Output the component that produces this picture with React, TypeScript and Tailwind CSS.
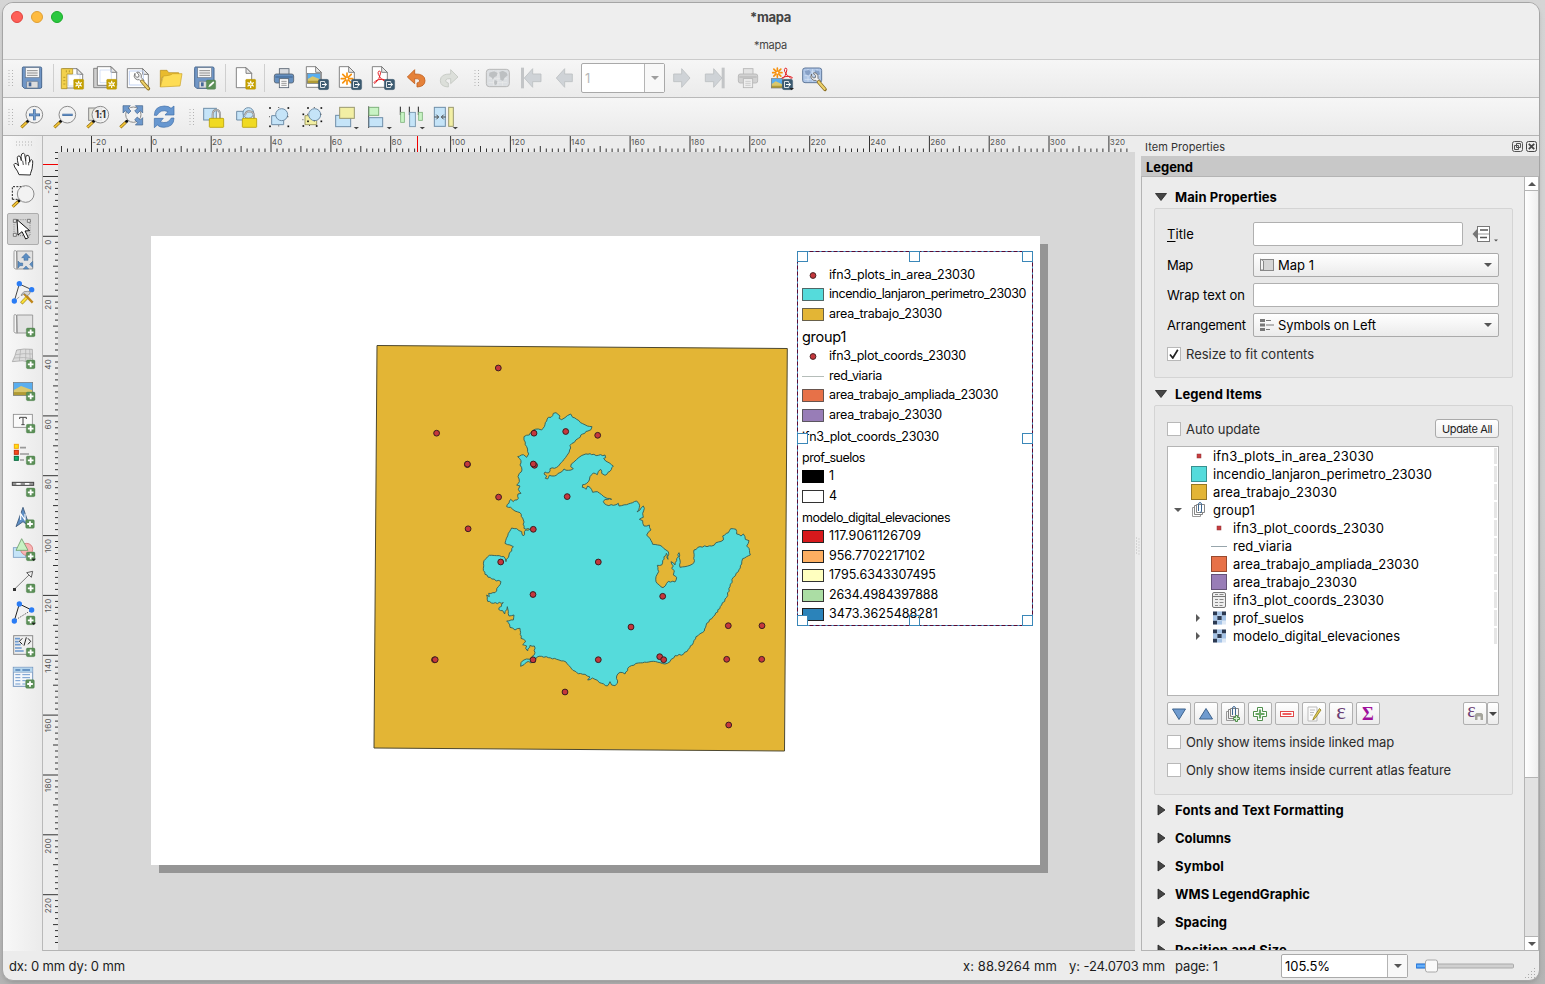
import { useLayoutEffect, useRef, type ReactNode } from "react";

/* ---------- helpers ---------- */

/** Text whose tracking is adjusted so that it spans `w` pixels. */
function Fit({ w, children, className = "" }: { w: number; children: string; className?: string }) {
  const ref = useRef<HTMLSpanElement>(null);
  useLayoutEffect(() => {
    const el = ref.current;
    if (!el) return;
    el.style.letterSpacing = "0px";
    const natural = el.getBoundingClientRect().width;
    el.style.letterSpacing = `${(w - natural) / children.length}px`;
  }, [w, children]);
  return (
    <span ref={ref} className={`inline-block shrink-0 whitespace-pre ${className}`}>
      {children}
    </span>
  );
}

/** 24px icon drawn on a 72-unit grid with its origin at (x, y). */
function I({ x, y, children, className = "" }: { x: number; y: number; children: ReactNode; className?: string }) {
  return (
    <svg className={`h-6 w-6 shrink-0 overflow-visible ${className}`} viewBox={`${x} ${y} 72 72`} fill="none">
      {children}
    </svg>
  );
}

function Sun({ x, y }: { x: number; y: number }) {
  return (
    <g transform={`translate(${x} ${y})`}>
      <rect width="30" height="30" rx="3" fill="#c4a000" stroke="#b39200" />
      <path d="M15 4v22M5.500 9.500l19 11M24.500 9.500l-19 11" stroke="#fff" strokeWidth="3.500" />
      <circle cx="15" cy="15" r="6" fill="#fff" />
      <circle cx="15" cy="15" r="3.500" fill="#e5c93c" />
    </g>
  );
}

function Export({ x, y }: { x: number; y: number }) {
  return (
    <g transform={`translate(${x} ${y})`}>
      <rect width="31" height="31" rx="5" fill="#3b5a70" stroke="#2f4a5e" />
      <path d="M19 10V6.500H6.500v18H19V21" stroke="#fff" strokeWidth="2.500" />
      <path d="M11 15.500h10" stroke="#fff" strokeWidth="3" />
      <path d="M19.500 9.500l7 6-7 6z" fill="#fff" />
    </g>
  );
}

function Plus({ x, y }: { x: number; y: number }) {
  return (
    <g transform={`translate(${x} ${y})`}>
      <rect width="26" height="26" rx="4" fill="#5b8f57" stroke="#447a42" />
      <path d="M13 4.500v17M4.500 13h17" stroke="#fff" strokeWidth="5.500" />
    </g>
  );
}

function Glass({ cx, cy, r = 25 }: { cx: number; cy: number; r?: number }) {
  return (
    <g>
      <path d={`M${cx - 39} ${cy + 38}L${cx - 22} ${cy + 22}`} stroke="#8b6508" strokeWidth="9" />
      <path d={`M${cx - 39} ${cy + 38}L${cx - 23} ${cy + 23}`} stroke="#f3c63a" strokeWidth="5" />
      <circle cx={cx - 20} cy={cy + 20} r="4.500" fill="#111" />
      <circle cx={cx} cy={cy} r={r} fill="#f2f2f2" fillOpacity="0.85" stroke="#8b8b8b" strokeWidth="3" />
    </g>
  );
}

function Floppy() {
  return (
    <g>
      <path d="M69 201h52q4 0 4 4v56q0 4-4 4H73l-6-6v-54q0-4 2-4z" fill="#7096c6" stroke="#49688f" strokeWidth="3" />
      <rect x="76" y="203" width="42" height="30" fill="#f5f5f5" stroke="#68778a" strokeWidth="2" />
      <path d="M81 212h32M81 219h32M81 226h32" stroke="#777" strokeWidth="2.500" />
      <rect x="80" y="244" width="34" height="20" rx="2" fill="#ddd" stroke="#5c6f88" strokeWidth="2" />
      <rect x="86" y="247" width="8" height="12" fill="#456899" />
    </g>
  );
}

function Doc({ x, y, w, h, stroke = "#6d6d6d" }: { x: number; y: number; w: number; h: number; stroke?: string }) {
  return (
    <g stroke={stroke} strokeWidth="2.500" strokeLinejoin="round">
      <path d={`M${x} ${y}h${w - 17}l17 17v${h - 17}h${-w}z`} fill="#fff" />
      <path d={`M${x + w - 17} ${y}v17h17z`} fill="#e8e8e8" />
    </g>
  );
}

function Printer({ x, faded = false }: { x: number; faded?: boolean }) {
  return (
    <g transform={`translate(${x} 0)`} strokeWidth="2.500" stroke={faded ? "#b4b4b4" : "#55616f"}>
      <rect x="15" y="206" width="29" height="20" fill={faded ? "#e3e3e3" : "#d8dbe0"} />
      <rect x="0" y="222" width="58" height="27" rx="6" fill={faded ? "#d2d2d2" : "#6690c0"} />
      <path d="M3 231h52" stroke={faded ? "#bdbdbd" : "#49709f"} strokeWidth="4" />
      <rect x="15" y="236" width="28" height="27" fill={faded ? "#eee" : "#fafafa"} />
      <path d="M21 244h16M21 250h16M21 256h16" stroke={faded ? "#bbb" : "#666"} strokeWidth="2" />
    </g>
  );
}

function Wrench({ x, y }: { x: number; y: number }) {
  return (
    <g transform={`translate(${x} ${y})`}>
      <path d="M3 4q-6 9 1 16 6 5 12 3l8 8 6-6-8-8q2-9-5-15-5-3-9-1l7 8-1 6-6 1-5-6z" fill="#f4f4f4" stroke="#666" strokeWidth="2.500" />
      <path d="M24 28l19 22" stroke="#8a6d20" strokeWidth="11" strokeLinecap="round" />
      <path d="M24 28l18 21" stroke="#ecd06a" strokeWidth="6.500" strokeLinecap="round" />
    </g>
  );
}

function Landscape({ x, y, w, h }: { x: number; y: number; w: number; h: number }) {
  return (
    <g transform={`translate(${x} ${y})`}>
      <rect width={w} height={h} fill="#59aef0" />
      <path d={`M0 ${h * 0.6}L${w * 0.4} ${h * 0.28}L${w} ${h * 0.6}V${h}H0z`} fill="#d9c76c" />
      <path d={`M0 ${h * 0.75}H${w}V${h}H0z`} fill="#b09b35" />
      <rect width={w} height={h} stroke="#777" strokeWidth="2" />
    </g>
  );
}

function Burst({ cx, cy, r = 17 }: { cx: number; cy: number; r?: number }) {
  return (
    <g stroke="#f7920e" strokeWidth="5" strokeLinecap="round">
      <path d={`M${cx} ${cy - r}V${cy + r}M${cx - r} ${cy}H${cx + r}`} />
      <path d={`M${cx - r * 0.75} ${cy - r * 0.75}l${r * 1.5} ${r * 1.5}M${cx + r * 0.75} ${cy - r * 0.75}l${-r * 1.5} ${r * 1.5}`} />
      <circle cx={cx} cy={cy} r="3" fill="#fff" stroke="none" />
    </g>
  );
}

const pdfCurve = (x: number, y: number) =>
  `M${x} ${y}q7-3 5 8-2 15-14 26-5 4-5 0 2-6 14-9 14-3 20 1 5 5-3 3-12-5-18-20-2-6 1-9`;

function Dots({ className }: { className: string }) {
  return (
    <svg className={`shrink-0 ${className}`} viewBox="0 0 6 19" fill="none">
      <path d="M1 1v18M4.500 1v18" stroke="#b3b3b3" strokeWidth="1" strokeDasharray="1 2" />
    </svg>
  );
}

function Tri({ className, d = "M0 0h8L4 4z" }: { className: string; d?: string }) {
  return (
    <svg className={`h-1 w-2 shrink-0 ${className}`} viewBox="0 0 8 4">
      <path d={d} fill="currentColor" />
    </svg>
  );
}

/* ---------- toolbars ---------- */

function LayoutToolbar() {
  return (
    <div className="flex h-[38px] items-center border-t border-[#cbcbcb] bg-gradient-to-b from-[#f6f6f6] to-[#ebebeb] pb-px pl-[5px]">
      <Dots className="mr-[6px] h-[19px] w-[6px]" />
      <I x={60} y={198}><Floppy /></I>
      <span className="mr-[6px] ml-[9px] h-7 w-px shrink-0 bg-[#cfcfcf]" />
      <div className="flex shrink-0 gap-[9px]">
        <I x={180} y={198}>
          <Doc x={188} y={206} w={60} h={58} />
          <path d="M205 224h35v34h-35z" stroke="#c2d3f3" strokeWidth="2" />
          <path d="M184 206h34v16h-17v44h-17z" fill="#f3d14c" stroke="#b2942a" strokeWidth="2.500" />
          <path d="M190 232h6M190 242h6M190 252h6M199 211v6M208 211v6" stroke="#9c7e1c" strokeWidth="2" />
          <Sun x={221} y={238} />
        </I>
        <I x={279} y={198}>
          <path d="M281 205h52v58h-52z" fill="#cfcfcf" stroke="#777" strokeWidth="2.500" />
          <Doc x={292} y={200} w={58} h={56} />
          <path d="M300 210h34v38h-34z" stroke="#c2d3f3" strokeWidth="2" />
          <Sun x={320} y={238} />
        </I>
        <I x={378} y={198}>
          <Doc x={382} y={206} w={63} h={57} />
          <path d="M388 213h42v42h-42z" stroke="#c2d3f3" strokeWidth="3" />
          <Wrench x={402} y={216} />
        </I>
        <I x={477} y={198}>
          <path d="M481 211h20l5 7h30v14h-50l-5 28z" fill="#e9bb2d" stroke="#b38b18" strokeWidth="2" />
          <path d="M490 228q24-2 28-7h28l-6 37-59 3z" fill="#fddc55" stroke="#c9a024" strokeWidth="2" />
        </I>
        <I x={576} y={198}>
          <g transform="translate(517 0)"><Floppy /></g>
          <rect x="619" y="240" width="28" height="28" rx="4" fill="#5b8f57" stroke="#447a42" />
          <path d="M625 262l3-8 12-10 3 4-11 11z" fill="#fff" />
        </I>
      </div>
      <span className="mr-[7px] ml-[9px] h-7 w-px shrink-0 bg-[#cfcfcf]" />
      <I x={699} y={198}>
        <Doc x={709} y={203} w={46} h={60} />
        <Sun x={737} y={238} />
      </I>
      <span className="mr-[7px] ml-[7px] h-7 w-px shrink-0 bg-[#cfcfcf]" />
      <div className="flex shrink-0 gap-[9px]">
        <I x={816} y={198}><Printer x={823} /></I>
        <I x={915} y={198}>
          <Doc x={919} y={200} w={45} h={62} />
          <Landscape x={922} y={220} w={39} h={30} />
          <Export x={955} y={238} />
        </I>
        <I x={1014} y={198}>
          <Doc x={1018} y={200} w={45} h={62} />
          <Burst cx={1041} cy={236} />
          <Export x={1054} y={238} />
        </I>
        <I x={1113} y={198}>
          <Doc x={1117} y={200} w={45} h={62} />
          <path d={pdfCurve(1136, 214)} stroke="#e5252a" strokeWidth="3" />
          <Export x={1153} y={238} />
        </I>
        <I x={12} y={198}>
          <path d="M22 231l22-22v13q31-1 31 20 0 18-24 19v-12q10-2 8-9-3-5-15-4v15z" fill="#e58139" stroke="#c05f1d" strokeWidth="2.500" strokeLinejoin="round" />
        </I>
        <I x={111} y={198}>
          <path d="M174 231l-22-22v13q-31-1-31 20 0 18 24 19v-12q-10-2-8-9 3-5 15-4v15z" fill="#dcdfda" stroke="#c3c7c1" strokeWidth="2.500" strokeLinejoin="round" />
        </I>
      </div>
      <Dots className="mr-[6px] ml-[13px] h-[19px] w-[6px]" />
      <div className="flex shrink-0 gap-[9px]">
        <I x={258} y={198}>
          <rect x="259" y="208" width="69" height="52" rx="9" fill="#dcdfe2" stroke="#b7b7b7" strokeWidth="3" />
          <path d="M266 222h55M266 235h55M266 248h55M280 211v46M294 211v46M308 211v46" stroke="#ececec" strokeWidth="2" />
          <path d="M268 218l14-4 11 5-3 9-7 4-4 7-5-7-7-4zM298 217l10-5 12 6 3 8-9 7-5 10-8-4-1-12zM284 240l8 3-1 9-6 4-3-8z" fill="#bdc0c2" />
        </I>
        <I x={357} y={198}>
          <rect x="363" y="203" width="9" height="62" fill="#c3c5c7" />
          <path d="M373 234l25-28v16h25v23h-25v17z" fill="#cfd3d7" stroke="#bcbfc2" strokeWidth="2.500" />
        </I>
        <I x={456} y={198}>
          <path d="M469 234l25-28v16h23v23h-23v17z" fill="#cfd3d7" stroke="#bcbfc2" strokeWidth="2.500" />
        </I>
      </div>
      <div className="mr-[5px] ml-[5px] flex h-[30px] w-[84px] shrink-0 rounded-[2px] border border-[#a9a9a9] bg-white">
        <div className="flex flex-1 items-center pl-[3px] text-[13px] text-[#b8b8b8]">1</div>
        <div className="flex w-5 items-center justify-center border-l border-[#b5b5b5] bg-[#f8f8f8] text-[#9e9e9e]"><Tri className="" /></div>
      </div>
      <div className="flex shrink-0 gap-[9px]">
        <I x={810} y={198}>
          <path d="M870 234l-25-28v16h-24v23h24v17z" fill="#cfd3d7" stroke="#bcbfc2" strokeWidth="2.500" />
        </I>
        <I x={909} y={198}>
          <rect x="965" y="203" width="9" height="62" fill="#c3c5c7" />
          <path d="M966 234l-25-28v16h-25v23h25v17z" fill="#cfd3d7" stroke="#bcbfc2" strokeWidth="2.500" />
        </I>
        <I x={1008} y={198}><Printer x={1015} faded /></I>
        <I x={1107} y={198}>
          <Burst cx={1132} cy={218} r={14} />
          <path d={pdfCurve(1155, 205)} stroke="#e5252a" strokeWidth="3" />
          <Landscape x={1114} y={236} w={33} h={28} />
          <Export x={1147} y={238} />
          <path d="M1168 264h14l-7 7z" fill="#222" />
        </I>
        <I x={1206} y={198}>
          <rect x="1208" y="204" width="57" height="44" rx="7" fill="#adc5e6" stroke="#61799b" strokeWidth="3" />
          <path d="M1214 216h46M1214 227h46M1214 238h46M1224 207v38M1238 207v38M1251 207v38" stroke="#dbe7f6" strokeWidth="2" />
          <path d="M1214 213l13-3 6 6-8 11-8-5zM1245 211l13 2 2 10-9 5-7-9z" fill="#86a0c6" />
          <Wrench x={1232} y={218} />
        </I>
      </div>
    </div>
  );
}

function Corner({ x, y, w, h }: { x: number; y: number; w: number; h: number }) {
  return (
    <g fill="#111">
      {[0, 0.5, 1].map((a) =>
        [0, 0.5, 1].map((b) =>
          a === 0.5 && b === 0.5 ? null : (
            <rect key={`${a}-${b}`} x={x + a * w - 2.5} y={y + b * h - 2.5} width={a === 0.5 || b === 0.5 ? 2.5 : 5} height={a === 0.5 || b === 0.5 ? 2.5 : 5} />
          ),
        ),
      )}
    </g>
  );
}

function ActionsToolbar() {
  return (
    <div className="flex h-[38px] items-center gap-[9px] border-t border-[#b9b9b9] bg-gradient-to-b from-[#f6f6f6] to-[#ebebeb] pt-px pl-[5px]">
      <Dots className="-mr-[3px] h-[19px] w-[6px]" />
      <I x={60} y={315}>
        <Glass cx={103} cy={344} />
        <path d="M103 328v33M87 344.500h33" stroke="#40699a" strokeWidth="8" />
        <path d="M103 330v29M89 344.500h29" stroke="#6f9bcf" strokeWidth="4" />
      </I>
      <I x={159} y={315}>
        <Glass cx={202} cy={344} />
        <path d="M187 344.500h31" stroke="#40699a" strokeWidth="7" />
        <path d="M189 344.500h27" stroke="#6f9bcf" strokeWidth="3" />
      </I>
      <I x={258} y={315}>
        <rect x="266" y="324" width="38" height="37" fill="#e5e5dc" stroke="#888" strokeWidth="3" />
        <Glass cx={301} cy={344} />
        <text x="301" y="354" textAnchor="middle" fontSize="29" fontWeight="700" fill="#333" fontFamily="Inter" letterSpacing="-1">1:1</text>
      </I>
      <I x={357} y={315}>
        <Glass cx={400} cy={344} r={23} />
        <g fill="#6d98cc" stroke="#3f608a" strokeWidth="2">
          <path d="M369 317h22l-7 7 9 9-8 8-9-9-7 7z" />
          <path d="M428 317v22l-7-7-9 9-8-8 9-9-7-7z" />
          <path d="M428 375h-22l7-7-9-9 8-8 9 9 7-7z" />
        </g>
      </I>
      <I x={456} y={315}>
        <path d="M463 346q0-27 30-28 14 0 20 7l9-7v27h-27l9-10q-22-9-33 11z" fill="#6797d0" stroke="#3e6da7" strokeWidth="2" />
        <path d="M522 354q0 27-30 28-14 0-20-7l-9 8v-28h27l-9 10q22 9 33-11z" fill="#6797d0" stroke="#3e6da7" strokeWidth="2" />
      </I>
      <Dots className="-mr-[3px] ml-[4px] h-[19px] w-[6px]" />
      <I x={603} y={315}>
        <rect x="611" y="325" width="38" height="35" fill="#c5e4f8" stroke="#6f8ea8" strokeWidth="3" />
        <path d="M638 357v-13q0-14 11-14t11 14v13" stroke="#8a8a8a" strokeWidth="6" />
        <path d="M638 357v-13q0-14 11-14t11 14v13" stroke="#ddd" strokeWidth="2" />
        <rect x="628" y="355" width="43" height="27" rx="2" fill="#f0da22" stroke="#b7a008" strokeWidth="2.500" />
      </I>
      <I x={702} y={315}>
        <path d="M710 334h20v26h-20z" fill="#c5e4f8" stroke="#6f8ea8" strokeWidth="3" />
        <circle cx="745" cy="339" r="16" fill="#c5e4f8" stroke="#6f8ea8" strokeWidth="3" />
        <path d="M735 346q2-12 12-12 14 1 15 13v10" stroke="#8a8a8a" strokeWidth="6" />
        <path d="M735 346q2-12 12-12 14 1 15 13v10" stroke="#ddd" strokeWidth="2" />
        <rect x="727" y="355" width="43" height="27" rx="2" fill="#f0da22" stroke="#b7a008" strokeWidth="2.500" />
      </I>
      <I x={801} y={315}>
        <path d="M815 347h36v27h-36z" fill="#c5e4f8" stroke="#6f8ea8" strokeWidth="3" />
        <circle cx="845" cy="344" r="18" fill="#c5e4f8" stroke="#6f8ea8" strokeWidth="3" />
        <Corner x={810} y={324} w={55} h={55} />
      </I>
      <I x={900} y={315}>
        <path d="M915 347h35v27h-35z" fill="#f2efa4" stroke="#8f8c50" strokeWidth="2.500" />
        <Corner x={910} y={343} w={40} h={35} />
        <circle cx="944" cy="344" r="18" fill="#c5e4f8" stroke="#6f8ea8" strokeWidth="3" />
        <Corner x={924} y={324} w={40} h={40} />
      </I>
      <I x={999} y={315}>
        <rect x="1007" y="346" width="45" height="34" fill="#c5e4f8" stroke="#6f8ea8" strokeWidth="3" />
        <rect x="1019" y="322" width="44" height="33" fill="#f2efa4" stroke="#9a9870" strokeWidth="3" />
        <path d="M1061 381h16l-8 7z" fill="#444" />
      </I>
      <I x={1098} y={315}>
        <path d="M1106 319v65" stroke="#444" strokeWidth="3" />
        <rect x="1107" y="322" width="29" height="24" fill="#c8f3c4" stroke="#7fb27c" strokeWidth="3" />
        <rect x="1107" y="353" width="41" height="27" fill="#c5e4f8" stroke="#6f8ea8" strokeWidth="3" />
        <path d="M1160 381h16l-8 7z" fill="#444" />
      </I>
      <I x={-3} y={315}>
        <path d="M1 320v25M28 320v25M55 320v25" stroke="#222" strokeWidth="3" />
        <rect x="2" y="337" width="11" height="30" fill="#c8f3c4" stroke="#7fb27c" strokeWidth="2.500" />
        <rect x="29" y="337" width="17" height="43" fill="#c5e4f8" stroke="#6f8ea8" strokeWidth="2.500" />
        <rect x="56" y="337" width="11" height="24" fill="#c8f3c4" stroke="#7fb27c" strokeWidth="2.500" />
        <path d="M59 381h16l-8 7z" fill="#444" />
      </I>
      <I x={96} y={315}>
        <rect x="103" y="322" width="33" height="57" fill="#c5e4f8" stroke="#6f8ea8" strokeWidth="3" />
        <rect x="146" y="322" width="14" height="57" fill="#f2efa4" stroke="#9a9870" strokeWidth="3" />
        <path d="M103 351h12M109 344l7 7-7 7M137 351h-12M131 344l-7 7 7 7" stroke="#444" strokeWidth="3" />
        <path d="M158 381h16l-8 7z" fill="#444" />
      </I>
    </div>
  );
}

function Scroll({ y }: { y: number }) {
  return (
    <g transform={`translate(0 ${y})`} stroke="#8d8d8d" strokeWidth="2.500">
      <path d="M50 6h48v54H50z" fill="#e2e2e2" />
      <path d="M50 8q-8-8-8 2v46q2 6 10 4z" fill="#f6f6f6" />
      <path d="M50 6v53" />
    </g>
  );
}

function Toolbox() {
  return (
    <div className="flex w-10 shrink-0 flex-col items-center border-r border-[#b9b9b9] bg-gradient-to-r from-[#f8f8f8] to-[#ebebeb] pt-[5px] pl-px">
      <svg className="mb-[7px] ml-[3px] h-[5px] w-[17px] shrink-0" viewBox="0 0 17 5" fill="none">
        <path d="M0 1h17M0 4h17" stroke="#b3b3b3" strokeDasharray="1 2" />
      </svg>
      <div className="flex flex-col items-center gap-2">
        <I x={33} y={69}>
          <path d="M57 134q-3-10-13-23-5-9 1-11 5-1 11 8-5-19-4-26 2-7 8-3 2 4 4 13-2-14 1-20 6-6 9 1l3 19q-1-13 3-16 6-2 8 5l1 16q1-8 5-8 6 1 4 12-1 18-5 25-2 5-2 9z" fill="#fff" stroke="#2c2c2c" strokeWidth="3" strokeLinejoin="round" />
          <path d="M68 92l2 13M77 91l1 13M86 96v10" stroke="#2c2c2c" strokeWidth="2.500" />
        </I>
        <I x={33} y={165}>
          <path d="M37 208v-38h40M37 208h24" stroke="#222" strokeWidth="3" strokeDasharray="6 4" />
          <Glass cx={77} cy={192} />
        </I>
        <div className="-my-1 flex h-8 w-8 items-center justify-center rounded-[2px] border border-[#adadad] bg-[#d5d5d5]">
          <I x={33} y={261}>
            <path d="M42 269h48v48H42z" stroke="#666" strokeWidth="2.500" strokeDasharray="2.500 4" />
            <path d="M40 268h9v9h-9zM82 268h9v9h-9zM40 310h9v9h-9z" stroke="#666" strokeWidth="2.500" fill="#e8e8e8" />
            <path d="M51 269l3 46 12-10 11 22 8-4-10-20 14-1z" fill="#fff" stroke="#111" strokeWidth="3" />
          </I>
        </div>
        <I x={33} y={357}>
          <Scroll y={357} />
          <g fill="#5b8ec4" stroke="#3a6492" strokeWidth="1.500">
            <path d="M78 370l13 13h-7v8H72v-8h-7z" />
            <path d="M54 393l6 6h8v8h-8l-6 7zM98 394l-9 9 9 9zM70 417l8-9 8 9z" />
          </g>
        </I>
        <I x={33} y={453}>
          <path d="M43 513l15-51 37 17" stroke="#222" strokeWidth="2.500" />
          <path d="M43 513l16-13" stroke="#222" strokeWidth="2.500" strokeDasharray="2 3" />
          <g fill="#2a7cf5"><circle cx="58" cy="461" r="8" /><circle cx="95" cy="479" r="8" /><circle cx="43" cy="513" r="8" /></g>
          <path d="M64 520l20-21" stroke="#9b7b12" strokeWidth="10" /><path d="M65 519l18-19" stroke="#f8df3a" strokeWidth="7" />
          <path d="M72 491l26 27" stroke="#bf861a" strokeWidth="7" />
          <path d="M63 495q7-14 20-11l8 1-3 8-7 4-6-6q-7-1-10 7z" fill="#d5d5d5" stroke="#777" strokeWidth="2" />
        </I>
        <I x={33} y={549}><Scroll y={549} /><Plus x={79} y={594} /></I>
        <I x={33} y={645}>
          <path d="M50 660q21-5 47-2l1 40q-32-10-61-3 9-17 13-35z" fill="#dcdcdc" stroke="#999" strokeWidth="2" />
          <path d="M47 674q25-5 51-2M42 684q30-4 56 2M62 659l-4 34M77 657v38M89 657l2 38" stroke="#adadad" strokeWidth="2" />
          <Plus x={79} y={690} />
        </I>
        <I x={33} y={741}><Landscape x={40} y={757} w={58} h={39} /><Plus x={79} y={786} /></I>
        <I x={33} y={27}>
          <rect x="40" y="43" width="57" height="39" fill="#fafafa" stroke="#8a8a8a" strokeWidth="2.500" />
          <path d="M59 57v-5h20v5M69 53v21M64 74h10" stroke="#444" strokeWidth="3" />
          <Plus x={79} y={73} />
        </I>
        <I x={33} y={123}>
          <g strokeWidth="3">
            <rect x="43" y="133" width="12" height="12" fill="#fce114" stroke="#f5a50b" />
            <rect x="43" y="151" width="12" height="12" fill="#fb4a1f" stroke="#bd2f0c" />
            <rect x="43" y="169" width="12" height="12" fill="#10b36c" stroke="#0b6a3f" />
          </g>
          <path d="M60 143h18M60 162h27M60 180h12" stroke="#999" strokeWidth="5" />
          <Plus x={79} y={168} />
        </I>
        <I x={33} y={219}>
          <rect x="37" y="247" width="64" height="9" fill="#999" stroke="#444" strokeWidth="3" />
          <path d="M49 251.500h13M75 251.500h13" stroke="#fff" strokeWidth="5" />
          <Plus x={79} y={264} />
        </I>
        <I x={33} y={315}>
          <path d="M69 322l20 58-20-15-21 15z" fill="#5d8ec4" stroke="#3b5778" strokeWidth="2.500" />
          <path d="M62 360v-19l13 19v-19" stroke="#fff" strokeWidth="3.500" />
          <Plus x={77} y={359} />
        </I>
        <I x={33} y={411}>
          <rect x="40" y="443" width="37" height="29" fill="#c5e4f8" stroke="#7c9fc2" strokeWidth="2.500" />
          <circle cx="80" cy="448" r="18" fill="#f8b4b4" stroke="#d57777" strokeWidth="2.500" />
          <path d="M65 416l19 35H48z" fill="#c8f3c4" stroke="#6c9c69" strokeWidth="2.500" />
          <Plus x={79} y={456} />
          <path d="M94 476h14l-7 7z" fill="#222" />
        </I>
        <I x={33} y={507}>
          <path d="M43 568l47-46" stroke="#666" strokeWidth="2.500" />
          <rect x="39" y="564" width="9" height="9" fill="#333" />
          <path d="M98 514l-4 18-14-14z" fill="#eee" stroke="#444" strokeWidth="2.500" />
          <Plus x={79} y={552} />
        </I>
        <I x={33} y={603}>
          <path d="M43 662l15-50 37 18" stroke="#222" strokeWidth="3" />
          <path d="M43 662l52-32" stroke="#222" strokeWidth="3" strokeDasharray="2.500 4" />
          <g fill="#2a7cf5"><circle cx="58" cy="612" r="8" /><circle cx="95" cy="630" r="8" /><circle cx="43" cy="663" r="8" /></g>
          <Plus x={79} y={648} />
          <path d="M94 668h14l-7 7z" fill="#222" />
        </I>
        <I x={33} y={699}>
          <rect x="41" y="707" width="57" height="56" fill="#efefef" stroke="#8c8c8c" strokeWidth="3" />
          <path d="M45 716h15M45 725h11M45 734h17M45 744h20M45 753h26" stroke="#6b98ce" strokeWidth="5" />
          <path d="M67 715l-9 9 9 9M84 715l8 9-8 9M79 712l-7 25" stroke="#222" strokeWidth="3" />
          <Plus x={79} y={744} />
        </I>
        <I x={33} y={795}>
          <rect x="40" y="802" width="58" height="57" fill="#f4f7fb" stroke="#7899c0" strokeWidth="3" />
          <path d="M41 803h56v13H41z" fill="#b5d6ee" />
          <path d="M46 810h15M67 810h23" stroke="#4f80b6" strokeWidth="4" />
          <path d="M41 817h56" stroke="#7899c0" strokeWidth="2" />
          <path d="M46 824h15M67 824h23M46 833h15M67 833h23M46 842h15M67 842h10M46 852h15M67 852h10" stroke="#6f9bcf" strokeWidth="3" />
          <Plus x={77} y={839} />
        </I>
      </div>
    </div>
  );
}

/* ---------- rulers ---------- */

const MM = 2.9925;

function HRuler() {
  const ticks: ReactNode[] = [];
  for (let mm = -30; mm <= 326; mm += 2) {
    const x = 151.3 - 43 + mm * MM;
    const top = mm % 20 === 0 ? 0 : mm % 10 === 0 ? 10 : 12.5;
    ticks.push(<path key={mm} d={`M${x.toFixed(1)} ${top}V16`} />);
    if (mm % 20 === 0)
      ticks.push(
        <text key={`t${mm}`} x={x + 0.8} y="8.800" stroke="none" fill="#555">{mm}</text>,
      );
  }
  return (
    <svg className="h-4 w-[1092px] shrink-0 bg-[#ececec]" viewBox="0 0 1092 16" fontFamily="Inter" fontSize="8" letterSpacing="0.3">
      <g stroke="#333">{ticks}</g>
      <rect x="374" width="1" height="16" fill="#f00000" />
    </svg>
  );
}

function VRuler() {
  const ticks: ReactNode[] = [];
  for (let mm = -28; mm <= 236; mm += 2) {
    const y = 236.3 - 152 + mm * MM;
    const left = mm % 20 === 0 ? 0 : mm % 10 === 0 ? 10 : 12;
    ticks.push(<path key={mm} d={`M${left} ${y.toFixed(1)}H15`} />);
    if (mm % 20 === 0)
      ticks.push(
        <text key={`t${mm}`} transform={`translate(8 ${y + 3}) rotate(-90)`} textAnchor="end" stroke="none" fill="#555">{mm}</text>,
      );
  }
  return (
    <svg className="h-[798px] w-[15px] shrink-0 bg-[#ececec]" viewBox="0 0 15 798" fontFamily="Inter" fontSize="8" letterSpacing="0.3">
      <g stroke="#333">{ticks}</g>
      <rect y="12" width="15" height="1" fill="#f00000" />
    </svg>
  );
}

/* ---------- map ---------- */

/* perimeter vertices, in thirds of a pixel */
const PERIMETER =
  "580,250 588,248 600,258 597,265 605,269 615,263 622,257 632,252 638,262 650,268 668,281 682,288 696,290 693,299 684,303 668,312 655,325 643,337 630,346 632,354 624,372 612,388 600,402 590,412 570,416 567,428 555,426 552,432 560,438 556,445 563,447 568,436 583,438 600,428 612,417 625,421 640,416 632,410 634,402 645,393 660,380 672,374 690,371 695,374 715,376 735,375 737,383 731,385 737,393 750,400 760,408 750,424 735,436 725,430 722,418 715,424 712,434 700,429 690,440 688,450 680,460 668,464 667,472 678,478 683,468 690,472 698,487 712,485 725,494 735,502 755,508 735,508 730,515 740,525 760,526 775,520 777,528 800,524 818,518 830,513 836,520 838,532 831,546 840,540 850,528 853,535 848,550 850,562 838,568 848,572 852,588 868,585 873,600 866,605 860,615 870,625 878,643 900,646 918,660 925,665 924,688 919,670 908,692 905,705 892,706 896,725 888,740 888,755 898,765 909,773 920,760 925,754 945,756 950,742 940,735 943,722 935,715 940,708 933,695 945,705 950,692 957,668 960,690 960,712 975,710 990,706 1002,698 1002,660 1020,650 1055,648 1075,636 1090,630 1088,618 1105,608 1112,596 1128,598 1130,612 1143,618 1150,612 1156,628 1167,632 1160,648 1167,655 1171,675 1148,686 1145,702 1135,725 1120,742 1110,770 1100,802 1085,825 1065,855 1040,880 1033,903 1008,920 1000,938 985,958 970,973 945,977 930,995 915,1002 900,998 880,994 860,997 835,999 808,1010 795,1032 780,1027 770,1038 772,1060 765,1067 755,1065 750,1055 742,1068 725,1060 705,1048 697,1044 683,1050 690,1041 675,1033 655,1031 635,1017 618,996 590,988 565,983 545,979 530,982 525,998 500,996 492,1004 482,1009 483,998 492,990 515,985 525,968 523,948 510,946 503,963 497,955 500,948 488,944 497,933 483,925 480,895 465,900 450,892 445,878 440,873 460,870 462,855 447,858 442,830 434,852 428,842 416,838 430,818 400,820 383,814 380,795 388,800 386,790 405,788 415,770 423,755 395,747 375,733 370,715 372,692 388,676 410,677 432,680 438,695 447,675 460,650 450,645 435,640 437,632 445,610 455,594 470,596 485,605 490,618 497,600 510,598 492,595 490,570 480,548 465,543 452,532 440,530 452,508 460,515 475,505 474,492 483,490 475,478 480,468 470,465 478,455 474,440 478,430 486,420 480,405 483,392 473,380 490,374 500,382 506,372 500,350 492,330 492,320 508,315 520,300 535,297 545,300 553,290 556,278 565,262 573,262";

function coastline(src: string) {
  const p = src.split(" ").map((s) => s.split(",").map(Number));
  const out: string[] = [];
  p.forEach(([x, y], i) => {
    const [nx, ny] = p[(i + 1) % p.length];
    out.push(`${x},${y}`);
    const len = Math.hypot(nx - x, ny - y);
    const n = Math.floor(len / 6);
    for (let k = 1; k < n; k++) {
      const j = Math.sin(i * 12.9 + k * 78.2) * 1.8;
      const t = k / n;
      out.push(`${(x + (nx - x) * t - ((ny - y) / len) * j).toFixed(1)},${(y + (ny - y) * t + ((nx - x) / len) * j).toFixed(1)}`);
    }
  });
  return out.join(" ");
}

const PLOTS: [number, number][] = [
  [498.3, 368], [436.6, 433.2], [467.4, 464.6], [467.4, 464.1], [498.6, 497.1], [468.1, 528.8], [534, 433.2], [565.7, 431.5], [597.7, 435.3],
  [534.5, 465.3], [533.3, 464], [567.2, 496.6], [533.3, 529.3], [500.7, 562], [598.3, 562], [533, 594.5], [662.7, 596.3],
  [631, 627], [728.3, 625.7], [762, 625.7], [434.5, 659.8], [435.2, 659.7], [533, 659.8], [598.3, 659.7], [659.7, 656.7], [663.7, 659.7],
  [726.7, 659.3], [761.7, 659.3], [565, 692], [728.7, 725],
];

function MapItem() {
  return (
    <svg className="h-full w-full" viewBox="151 236 889 629">
      <path d="M377 345.500L787.300 348.500L784.500 751L374 748z" fill="#e3b535" stroke="#4d4830" strokeWidth="1" />
      <g transform="translate(360 330) scale(0.33333)">
        <polygon points={coastline(PERIMETER)} fill="#55dbdb" stroke="#35605a" strokeWidth="2.800" strokeLinejoin="round" />
      </g>
      <g fill="#c5373c" stroke="#3d1d20" strokeWidth="1">
        {PLOTS.map(([x, y], i) => <circle key={i} cx={x} cy={y} r="2.900" />)}
      </g>
    </svg>
  );
}

/* ---------- legend drawn on the page ---------- */

function Patch({ color, stroke = "rgba(30,30,30,.65)" }: { color: string; stroke?: string }) {
  return (
    <svg className="h-[13px] w-[22px] shrink-0" viewBox="0 0 22 13">
      <rect x="0.500" y="0.500" width="21" height="12" fill={color} stroke={stroke} />
    </svg>
  );
}

function Marker() {
  return (
    <svg className="h-[13px] w-[22px] shrink-0" viewBox="0 0 22 13">
      <circle cx="11" cy="6.500" r="2.900" fill="#c5373c" stroke="#4a2325" />
    </svg>
  );
}

function LegendRow({ symbol, label, w, h = "h-[20px]" }: { symbol?: ReactNode; label: string; w: number; h?: string }) {
  return (
    <div className={`flex items-center gap-[5px] ${h}`}>
      {symbol}
      <Fit w={w}>{label}</Fit>
    </div>
  );
}

function Handle({ className }: { className: string }) {
  return <span className={`absolute h-[11px] w-[11px] border border-[#3a87b8] bg-white ${className}`} />;
}

function MapLegend() {
  return (
    <div className="absolute top-[15px] left-[646px] h-[375px] w-[236px] text-[12.500px] leading-none text-black">
      <div className="flex flex-col pt-[14px] pl-[5px]">
        <LegendRow symbol={<Marker />} label="ifn3_plots_in_area_23030" w={146} />
        <LegendRow symbol={<Patch color="#55dbdb" />} label="incendio_lanjaron_perimetro_23030" w={197} h="h-[19px]" />
        <LegendRow symbol={<Patch color="#e3b535" />} label="area_trabajo_23030" w={113} />
        <div className="flex h-[27px] items-center text-[14.500px]"><Fit w={44}>group1</Fit></div>
        <LegendRow symbol={<Marker />} label="ifn3_plot_coords_23030" w={137} h="h-[11px]" />
        <div className="h-[5px]" />
        <LegendRow symbol={<span className="h-px w-[22px] bg-[#b5bdb9]" />} label="red_viaria" w={53} h="h-[19px]" />
        <LegendRow symbol={<Patch color="#e77148" />} label="area_trabajo_ampliada_23030" w={169} h="h-[19px]" />
        <LegendRow symbol={<Patch color="#987db7" />} label="area_trabajo_23030" w={113} h="h-[20px]" />
        <LegendRow label="ifn3_plot_coords_23030" w={137} h="h-[25px]" />
        <LegendRow label="prof_suelos" w={63} h="h-[17px]" />
        <LegendRow symbol={<Patch color="#000" stroke="#000" />} label="1" w={7} h="h-[19px]" />
        <LegendRow symbol={<Patch color="#fff" stroke="#333" />} label="4" w={8} h="h-[20px]" />
        <LegendRow label="modelo_digital_elevaciones" w={148} h="h-[25px]" />
        <LegendRow symbol={<Patch color="#d7191c" stroke="#222" />} label="117.9061126709" w={92} h="h-[11px]" />
        <div className="h-[4px]" />
        <LegendRow symbol={<Patch color="#fdae61" stroke="#222" />} label="956.7702217102" w={96} />
        <LegendRow symbol={<Patch color="#ffffbf" stroke="#333" />} label="1795.6343307495" w={107} h="h-[19px]" />
        <LegendRow symbol={<Patch color="#abdda4" stroke="#333" />} label="2634.4984397888" w={109} />
        <LegendRow symbol={<Patch color="#2b83ba" stroke="#222" />} label="3473.3625488281" w={109} h="h-[19px]" />
      </div>
      <svg className="absolute inset-0 h-full w-full" viewBox="0 0 236 375" fill="none">
        <path d="M.5.5h235v374H.5z" stroke="#4a9fd0" />
        <path d="M.5.5h235v374H.5z" stroke="#5a0a35" strokeDasharray="4 2" />
      </svg>
      <Handle className="top-0 left-0" />
      <Handle className="top-0 left-[112px]" />
      <Handle className="top-0 right-0" />
      <Handle className="top-[182px] left-0" />
      <Handle className="top-[182px] right-0" />
      <Handle className="bottom-0 left-0" />
      <span className="absolute bottom-0 left-[112px] h-[11px] w-[11px] border border-[#3a87b8]" />
      <Handle className="right-0 bottom-0" />
    </div>
  );
}

/* ---------- item properties ---------- */

function Check({ on = false, label, w }: { on?: boolean; label: string; w: number }) {
  return (
    <div className="flex items-center gap-[5px] text-[#2c2c2c]">
      <span className="flex h-[14px] w-[14px] items-center justify-center border border-[#b8b8b8] bg-white">
        {on && (
          <svg className="h-[10px] w-[10px]" viewBox="0 0 10 10" fill="none">
            <path d="M1 5.500l2.800 3.500L8.800.8" stroke="#222" strokeWidth="1.700" />
          </svg>
        )}
      </span>
      <Fit w={w}>{label}</Fit>
    </div>
  );
}

function Section({ label, w, open = false }: { label: string; w: number; open?: boolean }) {
  return (
    <div className="flex h-7 items-center pl-[13px] font-bold text-black">
      <svg className="mr-[8px] h-[12px] w-[12px] shrink-0" viewBox="0 0 12 12">
        <path d={open ? "M.5 2.500h11L6 9.500z" : "M3 1l7 5-7 5z"} fill="#454545" stroke="#222" strokeWidth=".8" />
      </svg>
      <Fit w={w}>{label}</Fit>
    </div>
  );
}

function Combo({ children }: { children: ReactNode }) {
  return (
    <div className="flex h-6 w-[246px] items-center rounded-[2px] border border-[#aaa] bg-gradient-to-b from-white to-[#ebebeb] pr-[6px] pl-[5px] text-black">
      {children}
      <Tri className="ml-auto text-[#555]" />
    </div>
  );
}

function FormRow({ label, w, underline = false, children }: { label: string; w: number; underline?: boolean; children: ReactNode }) {
  return (
    <div className="flex h-6 items-center text-black">
      <div className="w-[86px] shrink-0">
        {underline ? <span className="tracking-[.1px]"><span className="underline underline-offset-2">{label[0]}</span>{label.slice(1)}</span> : <Fit w={w}>{label}</Fit>}
      </div>
      {children}
    </div>
  );
}

function Swatch({ color, border }: { color: string; border: string }) {
  return (
    <svg className="h-4 w-4 shrink-0" viewBox="0 0 16 16">
      <rect x=".5" y=".5" width="15" height="15" fill={color} stroke={border} />
    </svg>
  );
}

const dot = (
  <svg className="h-4 w-4 shrink-0" viewBox="0 0 16 16"><rect x="6" y="6" width="4" height="4" fill="#c83c3f" stroke="#8a3336" strokeWidth=".5" /></svg>
);
const rasterIcon = (
  <svg className="h-4 w-4 shrink-0" viewBox="0 0 16 16">
    <rect x="2" y="1.500" width="13" height="13" fill="#dde8f5" />
    <path d="M2 1.500h4v4H2zM11 1.500h4v4h-4zM6.500 6h4v4h-4zM2 10.500h4v4H2z" fill="#2c3a52" />
    <path d="M6 1.500h5v4H6zM2 5.500h4.500v5H2zM10.500 5.500H15v5h-4.500zM6 10.500h5v4H6z" fill="#a5c3e6" />
    <path d="M6.500 6h4v4h-4z" fill="#2c3a52" />
  </svg>
);
const tableIcon = (
  <svg className="h-4 w-4 shrink-0" viewBox="0 0 16 16" fill="none">
    <rect x="1.500" y=".5" width="13" height="15" rx="1.500" fill="#eee" stroke="#777" />
    <path d="M2 4.500h12" stroke="#777" />
    <path d="M4 2.500h3M8.500 2.500h4M4 7.500h3M8.500 7.500h4M4 10.500h3M8.500 10.500h4M4 13.500h3M8.500 13.500h3" stroke="#888" />
  </svg>
);
function GroupIcon() {
  return (
    <svg className="h-4 w-4 shrink-0" viewBox="0 0 16 16" fill="none">
      <path d="M3.500 5.500H1.500v9h8v-2" stroke="#999" />
      <path d="M5.500 3.500h-2v9h8v-2M5.500 10.500v-8h8v8z" stroke="#858585" />
      <path d="M7.500 9V2.500q0-2 1.500-2t1.500 2V9q0 1.500-1.500 1.500" stroke="#3b6692" />
    </svg>
  );
}

interface Node { label: string; w: number; icon: ReactNode; depth: number; arrow?: "open" | "closed" }

const TREE: Node[] = [
  { label: "ifn3_plots_in_area_23030", w: 161, icon: dot, depth: 0 },
  { label: "incendio_lanjaron_perimetro_23030", w: 219, icon: <Swatch color="#55dbdb" border="#38908f" />, depth: 0 },
  { label: "area_trabajo_23030", w: 124, icon: <Swatch color="#e3b535" border="#957723" />, depth: 0 },
  { label: "group1", w: 42, icon: <GroupIcon />, depth: 0, arrow: "open" },
  { label: "ifn3_plot_coords_23030", w: 151, icon: dot, depth: 1 },
  { label: "red_viaria", w: 59, icon: <span className="h-px w-4 bg-[#97a5ab]" />, depth: 1 },
  { label: "area_trabajo_ampliada_23030", w: 186, icon: <Swatch color="#e77148" border="#984a2f" />, depth: 1 },
  { label: "area_trabajo_23030", w: 124, icon: <Swatch color="#987db7" border="#645278" />, depth: 1 },
  { label: "ifn3_plot_coords_23030", w: 151, icon: tableIcon, depth: 1 },
  { label: "prof_suelos", w: 71, icon: rasterIcon, depth: 1, arrow: "closed" },
  { label: "modelo_digital_elevaciones", w: 167, icon: rasterIcon, depth: 1, arrow: "closed" },
];

function Tree() {
  return (
    <div className="h-[250px] border border-[#b4b4b4] bg-white text-black">
      {TREE.map((n, i) => (
        <div key={i} className={`flex h-[18px] items-center ${n.depth ? "pl-[25px]" : "pl-[5px]"}`}>
          <svg className="mr-[8px] h-[10px] w-[10px] shrink-0" viewBox="0 0 10 10">
            {n.arrow === "open" && <path d="M1 3h8L5 7z" fill="#5a5a5a" />}
            {n.arrow === "closed" && <path d="M3 1l4 4-4 4z" fill="#5a5a5a" />}
          </svg>
          {n.icon}
          <Fit w={n.w} className="ml-[6px]">{n.label}</Fit>
          <span className="mr-px ml-auto h-4 w-[3px] bg-[#e6e6e6]" />
        </div>
      ))}
    </div>
  );
}

function ToolBtn({ children, className = "w-6" }: { children: ReactNode; className?: string }) {
  return (
    <div className={`flex h-[23px] shrink-0 items-center justify-center rounded-[2px] border border-[#b0b0b0] bg-gradient-to-b from-white to-[#ececec] ${className}`}>
      {children}
    </div>
  );
}

function Ic({ children }: { children: ReactNode }) {
  return <svg className="h-4 w-4 shrink-0" viewBox="0 0 16 16" fill="none">{children}</svg>;
}

function LegendTools() {
  return (
    <div className="flex gap-[3px]">
      <ToolBtn><Ic><path d="M1.500 3h13L8 13.500z" fill="#6f9bcf" stroke="#3e648f" /></Ic></ToolBtn>
      <ToolBtn><Ic><path d="M1.500 13h13L8 2.500z" fill="#6f9bcf" stroke="#3e648f" /></Ic></ToolBtn>
      <ToolBtn>
        <Ic>
          <path d="M3.500 5.500H1.500v9h8v-2" stroke="#999" />
          <path d="M5.500 3.500h-2v9h8v-2M5.500 10.500v-8h8v8z" stroke="#858585" />
          <path d="M7.500 9V2.500q0-2 1.500-2t1.500 2V9" stroke="#3b6692" />
          <path d="M10.500 9.500h2v2h2v2h-2v2h-2v-2h-2v-2h2z" fill="#d6f2d2" stroke="#4f8f4b" />
        </Ic>
      </ToolBtn>
      <ToolBtn><Ic><path d="M5.500 1.500h5v4h4v5h-4v4h-5v-4h-4v-5h4z" fill="#fff" stroke="#4f8f4b" /><path d="M8 3.500v9M3.500 8h9" stroke="#6aa866" strokeWidth="2.200" /></Ic></ToolBtn>
      <ToolBtn><Ic><rect x="1.500" y="5.500" width="13" height="5" fill="#fff" stroke="#e04848" /><path d="M3.500 8h9" stroke="#f26060" strokeWidth="2" /></Ic></ToolBtn>
      <ToolBtn><Ic><path d="M2 1h9v14H2z" fill="#fafafa" stroke="#bbb" /><path d="M4 4h5M4 6.500h4M4 9h3" stroke="#bbb" /><path d="M13.500 2.500L8 11l-1.200 3L9 12.500 15 4z" fill="#e5d055" stroke="#8a7a22" strokeWidth=".8" /></Ic></ToolBtn>
      <ToolBtn><span className="-mt-[3px] font-['Liberation_Serif',serif] text-[23px] leading-[14px] text-[#6b3f74]">ε</span></ToolBtn>
      <ToolBtn><span className="font-['Liberation_Serif',serif] text-[18px] leading-none font-bold text-[#a0109c]">Σ</span></ToolBtn>
      <div className="ml-auto flex">
        <ToolBtn className="w-6">
          <span className="-mt-[8px] font-['Liberation_Serif',serif] text-[20px] leading-[14px] text-[#6b3f74]">ε</span>
          <svg className="mb-[3px] -ml-px h-2 w-2 self-end" viewBox="0 0 8 8"><path d="M0 1.500L1.500 0h5L8 1.500V7H5.500V3.500h-3V7H0z" fill="#a5a59c" /></svg>
        </ToolBtn>
        <ToolBtn className="w-3"><Tri className="text-[#444]" /></ToolBtn>
      </div>
    </div>
  );
}

function Panel() {
  return (
    <div className="flex w-[398px] shrink-0 flex-col bg-[#ececec]">
      <div className="flex h-5 shrink-0 items-center pt-px pr-[2px] pl-[4px] text-[11px] text-[#333]">
        <Fit w={80}>Item Properties</Fit>
        <svg className="ml-auto h-[11px] w-[11px]" viewBox="0 0 11 11" fill="none" stroke="#555">
          <rect x=".5" y=".5" width="10" height="10" rx="2" /><path d="M4.500 2.500h4v4h-4zM2.500 4.500h4v4h-4z" />
        </svg>
        <svg className="ml-[3px] h-[11px] w-[11px]" viewBox="0 0 11 11" fill="none" stroke="#444">
          <rect x=".5" y=".5" width="10" height="10" rx="2" /><path d="M2.800 2.800l5.400 5.400M8.200 2.800L2.800 8.200" strokeWidth="1.800" />
        </svg>
      </div>
      <div className="flex h-5 shrink-0 items-center bg-[#c8c8c8] pt-px pl-[5px] font-bold text-black"><Fit w={47}>Legend</Fit></div>
      <div className="flex min-h-0 flex-1 border-t border-b border-l border-[#b4b4b4]">
        <div className="min-w-0 flex-1 overflow-hidden pt-[6px]">
          <Section label="Main Properties" w={102} open />
          <div className="mr-[11px] -mt-[3px] ml-[12px] flex h-[170px] flex-col rounded-[2px] border border-[#d4d4d4] bg-[#e8e8e8] pt-[13px] pl-[12px]">
            <FormRow label="Title" w={26} underline>
              <span className="h-6 w-[210px] rounded-[2px] border border-[#b0b0b0] bg-white" />
              <svg className="ml-[9px] h-[18px] w-[26px]" viewBox="0 0 26 18" fill="none">
                <path d="M6 3v12L.5 9z" fill="#777" /><rect x="5.500" y="1.500" width="12" height="15" fill="#fff" stroke="#777" />
                <path d="M8 5h8M8 12.500h7" stroke="#555" strokeWidth="1.500" /><path d="M6 9h11" stroke="#999" /><path d="M22 14.500h4l-2 2z" fill="#555" />
              </svg>
            </FormRow>
            <div className="h-[7px]" />
            <FormRow label="Map" w={26}>
              <Combo>
                <svg className="mr-[4px] h-[14px] w-[15px]" viewBox="0 0 15 14"><rect x="1.500" y="1.500" width="13" height="11" fill="#d5d5d5" stroke="#888" /><path d="M1.500 1v11h3V3z" fill="#f3f3f3" stroke="#888" /></svg>
                <Fit w={36}>Map 1</Fit>
              </Combo>
            </FormRow>
            <div className="h-[6px]" />
            <FormRow label="Wrap text on" w={78}><span className="h-6 w-[246px] rounded-[2px] border border-[#b0b0b0] bg-white" /></FormRow>
            <div className="h-[6px]" />
            <FormRow label="Arrangement" w={79}>
              <Combo>
                <svg className="mr-[4px] h-[14px] w-[15px]" viewBox="0 0 15 14"><path d="M1 1h5v3H1zM1 5.500h5v3H1zM1 10h5v3H1z" fill="#777" /><path d="M7 2.500h5M7 7h8M7 11.500h4" stroke="#777" /></svg>
                <Fit w={98}>Symbols on Left</Fit>
              </Combo>
            </FormRow>
            <div className="h-[9px]" />
            <Check on label="Resize to fit contents" w={128} />
          </div>
          <div className="h-[2px]" />
          <Section label="Legend Items" w={87} open />
          <div className="mr-[11px] -mt-[3px] ml-[12px] flex h-[390px] flex-col rounded-[2px] border border-[#d4d4d4] bg-[#e8e8e8] pt-[13px] pr-[13px] pl-[12px]">
            <div className="flex h-[19px] items-center justify-between">
              <Check label="Auto update" w={74} />
              <div className="flex h-[19px] w-16 items-center justify-center rounded-[3px] border border-[#aaa] bg-gradient-to-b from-white to-[#eee] text-[11px] text-[#222]"><Fit w={50}>Update All</Fit></div>
            </div>
            <div className="h-2" />
            <Tree />
            <div className="h-[6px]" />
            <LegendTools />
            <div className="h-[9px]" />
            <Check label="Only show items inside linked map" w={208} />
            <div className="h-[12px]" />
            <Check label="Only show items inside current atlas feature" w={265} />
          </div>
          <div className="h-px" />
          <Section label="Fonts and Text Formatting" w={169} />
          <Section label="Columns" w={56} />
          <Section label="Symbol" w={49} />
          <Section label="WMS LegendGraphic" w={135} />
          <Section label="Spacing" w={52} />
          <Section label="Position and Size" w={112} />
        </div>
        <div className="flex w-[15px] shrink-0 flex-col border-r border-l border-[#b4b4b4] bg-[#e2e2e2]">
          <div className="flex h-[14px] items-center justify-center border-b border-[#b4b4b4] bg-white text-[#555]"><Tri className="" d="M0 4h8L4 0z" /></div>
          <div className="h-[587px] border-b border-[#b4b4b4] bg-gradient-to-r from-white to-[#efefef]" />
          <div className="flex-1" />
          <div className="flex h-[14px] items-center justify-center border-t border-[#b4b4b4] bg-white text-[#555]"><Tri className="" /></div>
        </div>
      </div>
    </div>
  );
}

/* ---------- window ---------- */

function StatusBar() {
  return (
    <div className="flex h-[29px] shrink-0 items-center pl-[6px] text-[#1c1c1c]">
      <Fit w={116}>dx: 0 mm dy: 0 mm</Fit>
      <Fit w={94} className="ml-[838px]">x: 88.9264 mm</Fit>
      <Fit w={96} className="ml-[12px]">y: -24.0703 mm</Fit>
      <Fit w={43} className="ml-[10px]">page: 1</Fit>
      <div className="mt-px ml-[63px] flex h-6 w-[127px] rounded-[2px] border border-[#aaa] bg-white text-black">
        <div className="flex flex-1 items-center pl-[3px]"><Fit w={45}>105.5%</Fit></div>
        <div className="flex w-5 items-center justify-center border-l border-[#b4b4b4] bg-[#f8f8f8] text-[#555]"><Tri className="" /></div>
      </div>
      <svg className="ml-[8px] h-[14px] w-[98px]" viewBox="0 0 98 14" fill="none">
        <rect x=".5" y="5" width="97" height="4" rx="1" fill="#d0d0d0" stroke="#aaa" />
        <path d="M0 7h10" stroke="#2f7fe0" strokeWidth="5" />
        <path d="M1 7h10" stroke="#65aef8" strokeWidth="2.500" />
        <rect x="9.500" y="1" width="12" height="12" rx="2" fill="#fafafa" stroke="#a8a8a8" />
      </svg>
      <svg className="mr-[2px] ml-auto h-3 w-3 self-end" viewBox="0 0 12 12" fill="#aaa">
        {[0, 1, 2, 3].map((r) => Array.from({ length: r + 1 }, (_, c) => <rect key={`${r}${c}`} x={9 - c * 3} y={r * 3} width="1" height="1" />))}
      </svg>
    </div>
  );
}

export default function App() {
  return (
    <div className="flex h-[984px] w-[1545px] overflow-hidden bg-gradient-to-b from-[#d5d5d5] via-[#d0d0d0] to-[#b5b5b5] pt-[2px] pl-[2px] font-['Inter',sans-serif] text-[13px] leading-4">
      <div className="flex h-[979px] w-[1538px] flex-col overflow-hidden rounded-[11px] border border-[#a5a5a5] bg-[#ececec] shadow-md">
        <div className="flex h-14 shrink-0 bg-[#eee]">
          <div className="flex w-[180px] gap-2 pt-2 pl-2">
            <span className="h-3 w-3 rounded-full border border-[#e0443e] bg-[#fe5f57]" />
            <span className="h-3 w-3 rounded-full border border-[#de9f34] bg-[#febb40]" />
            <span className="h-3 w-3 rounded-full border border-[#1aab29] bg-[#2bc840]" />
          </div>
          <div className="flex flex-1 flex-col items-center pt-[6px] pr-[181px] text-[#444]">
            <Fit w={41} className="font-bold">*mapa</Fit>
            <Fit w={33} className="mt-[12px] text-[11px]">*mapa</Fit>
          </div>
        </div>
        <LayoutToolbar />
        <ActionsToolbar />
        <div className="flex min-h-0 flex-1 border-t border-[#b4b4b4]">
          <Toolbox />
          <div className="flex min-w-0 flex-1 flex-col overflow-hidden border-b border-[#b4b4b4]">
            <HRuler />
            <div className="flex min-h-0 flex-1">
              <VRuler />
              <div className="relative h-full w-[1077px] shrink-0 overflow-hidden bg-[#d7d7d7]">
                <div className="absolute top-[84px] left-[93px] h-[629px] w-[889px] bg-white shadow-[8px_8px_0_0_#959595]">
                  <MapItem />
                  <MapLegend />
                </div>
              </div>
            </div>
          </div>
          <svg className="h-full w-[6px] shrink-0" viewBox="0 0 6 814" fill="none"><path d="M1.500 401v18M4 402v18" stroke="#bbb" strokeDasharray="1 2" /></svg>
          <Panel />
        </div>
        <StatusBar />
      </div>
    </div>
  );
}
